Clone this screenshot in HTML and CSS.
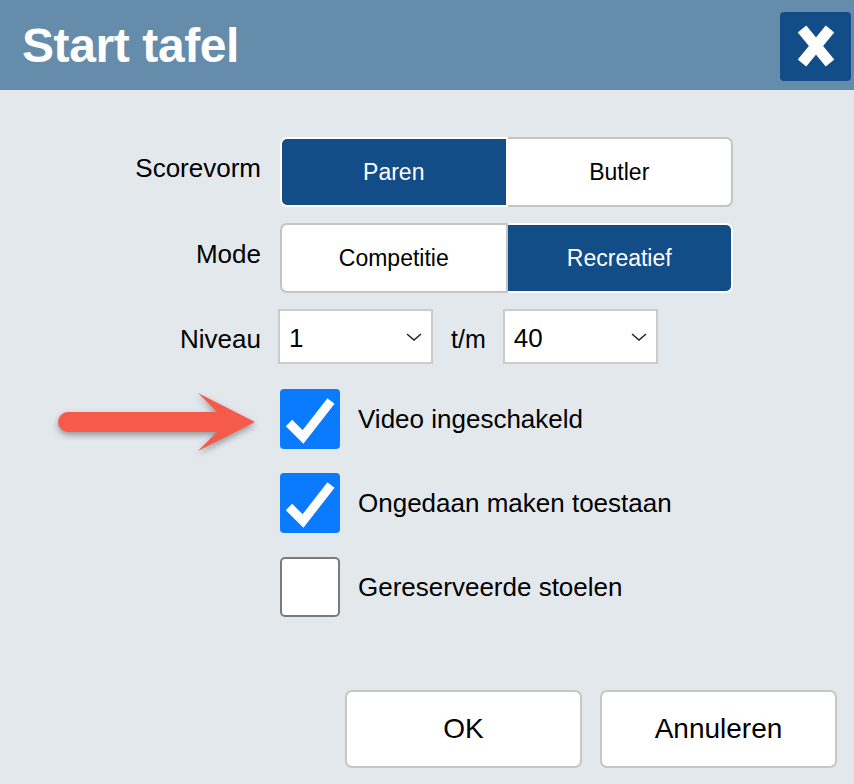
FILE: index.html
```html
<!DOCTYPE html>
<html lang="nl">
<head>
    <meta charset="UTF-8">
    <meta name="viewport" content="width=device-width, initial-scale=1.0">
    <title>Start tafel</title>
    <link rel="stylesheet" href="styles.css">
</head>
<body>

<div class="header">
    <h1>Start tafel</h1>
    <button class="close-button" aria-label="Sluiten">
        <svg width="36" height="44" viewBox="0 0 36 44">
            <line x1="4" y1="5" x2="32" y2="39" stroke="#fff" stroke-width="11"/>
            <line x1="32" y1="5" x2="4" y2="39" stroke="#fff" stroke-width="11"/>
        </svg>
    </button>
</div>

<div class="form">
    <div class="row">
        <span class="label">Scorevorm</span>
        <div class="segmented">
            <button class="segment active">Paren</button>
            <button class="segment">Butler</button>
        </div>
    </div>

    <div class="row">
        <span class="label">Mode</span>
        <div class="segmented">
            <button class="segment">Competitie</button>
            <button class="segment active">Recreatief</button>
        </div>
    </div>

    <div class="row row-level">
        <span class="label">Niveau</span>
        <div class="select">
            <span>1</span>
            <svg width="16" height="8" viewBox="0 0 16 8"><polyline points="1,1 8,7 15,1" fill="none" stroke="#222" stroke-width="1.5"/></svg>
        </div>
        <span class="until">t/m</span>
        <div class="select">
            <span>40</span>
            <svg width="16" height="8" viewBox="0 0 16 8"><polyline points="1,1 8,7 15,1" fill="none" stroke="#222" stroke-width="1.5"/></svg>
        </div>
    </div>

    <div class="checks">
        <label class="check-row">
            <span class="checkbox checked">
                <svg width="60" height="60" viewBox="0 0 60 60"><polyline points="9,34 23,48 51,12" fill="none" stroke="#fff" stroke-width="9"/></svg>
            </span>
            Video ingeschakeld
        </label>
        <label class="check-row">
            <span class="checkbox checked">
                <svg width="60" height="60" viewBox="0 0 60 60"><polyline points="9,34 23,48 51,12" fill="none" stroke="#fff" stroke-width="9"/></svg>
            </span>
            Ongedaan maken toestaan
        </label>
        <label class="check-row">
            <span class="checkbox"></span>
            Gereserveerde stoelen
        </label>
    </div>
</div>

<div class="actions">
    <button class="btn">OK</button>
    <button class="btn">Annuleren</button>
</div>

<!-- pointer to the video option -->
<svg class="arrow" width="220" height="80" viewBox="48 385 220 80">
    <path d="M68 412 H217 L198 393 L255 422 L198 451 L217 432 H68 A10 10 0 0 1 68 412 Z" fill="#f65a4b"/>
</svg>

</body>
</html>
```

FILE: styles.css
```css
body {
    margin: 0;
    min-height: 784px;
    background-color: #e3e8ec;
    font-family: "Liberation Sans", Arial, sans-serif;
    color: #000;
    position: relative;
}
button {
    font-family: inherit;
    color: inherit;
    cursor: pointer;
}
.header {
    height: 90px;
    background-color: #658caa;
    display: flex;
    align-items: center;
    justify-content: space-between;
    padding: 0 3px 0 22px;
}
.header h1 {
    margin: 0;
    color: white;
    font-size: 48px;
    letter-spacing: -0.4px;
    font-weight: bold;
}
.close-button {
    width: 71px;
    height: 69px;
    margin-top: 2px;
    background-color: #124d88;
    border: none;
    border-radius: 4px;
    display: flex;
    align-items: center;
    justify-content: center;
    padding: 0;
}
.form {
    padding-top: 47px;
    display: flex;
    flex-direction: column;
    gap: 16px;
}
.row {
    display: flex;
    align-items: center;
    gap: 19px;
}
.label {
    width: 261px;
    text-align: right;
    font-size: 26px;
    padding-bottom: 8px;
}
.segmented {
    display: flex;
    width: 453px;
    height: 70px;
}
.segment {
    flex: 1;
    font-size: 23px;
    background-color: white;
    border: 2px solid #c4c4c4;
    padding: 0;
}
.segment:first-child {
    border-radius: 7px 0 0 7px;
}
.segment:last-child {
    border-left: none;
    border-radius: 0 7px 7px 0;
}
.segment.active {
    background-color: #124d88;
    border-color: white;
    color: white;
}
.row-level {
    gap: 0;
}
.row-level .label {
    margin-right: 17px;
    padding: 6px 0 0;
}
.select {
    width: 155px;
    height: 55px;
    box-sizing: border-box;
    background-color: white;
    border: 2px solid #cbcbcb;
    display: flex;
    align-items: center;
    justify-content: space-between;
    padding: 3px 9px 0 9px;
    font-size: 26px;
}
.select svg {
    margin-bottom: 3px;
}
.until {
    font-size: 25px;
    margin: 6px 17px 0 18px;
}
.checks {
    margin-top: 9px;
    padding-left: 280px;
    display: flex;
    flex-direction: column;
    gap: 24px;
}
.check-row {
    display: flex;
    align-items: center;
    gap: 18px;
    font-size: 26px;
}
.checkbox {
    width: 60px;
    height: 60px;
    box-sizing: border-box;
    border: 2px solid #7a7a7a;
    border-radius: 5px;
    background-color: white;
}
.checkbox.checked {
    border: none;
    border-radius: 4px;
    background-color: #0a7bff;
}
.actions {
    display: flex;
    justify-content: flex-end;
    gap: 18px;
    padding-right: 17px;
    margin-top: 73px;
}
.btn {
    width: 237px;
    height: 78px;
    background-color: white;
    border: 2px solid #c6c6c6;
    border-radius: 7px;
    font-size: 28px;
}
.arrow {
    position: absolute;
    left: 48px;
    top: 385px;
    filter: drop-shadow(0 3px 3px rgba(0, 0, 0, 0.35));
}
```
